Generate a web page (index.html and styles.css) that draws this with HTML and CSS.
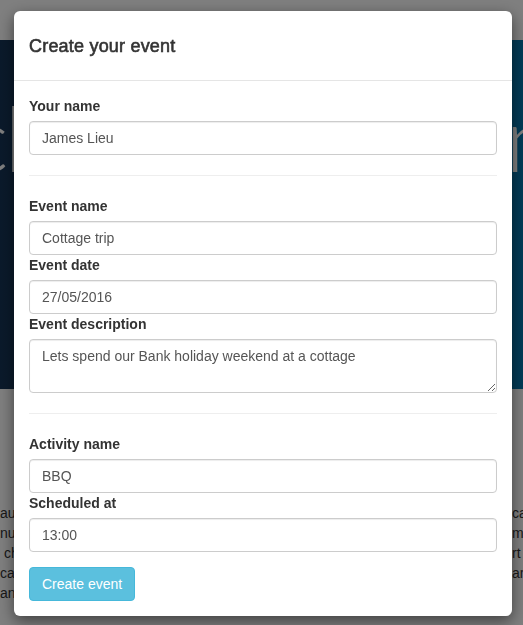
FILE: index.html
```html
<!DOCTYPE html>
<html lang="en">
<head>
<meta charset="utf-8">
<title>Create your event</title>
<link rel="stylesheet" href="styles.css">
</head>
<body>
  <div class="page">
    <nav class="navbar"></nav>
    <header class="hero">
      <h1 class="hero-title"><span class="hero-left">cl</span><span>n</span></h1>
    </header>
    <section class="content">
      <p class="col col-left">aut odit aut fugit<br>nulla pariatur<br>&nbsp;choose a date<br>cabin weekend<br>and friends</p>
      <p class="col col-right">camping trip<br>minutes<br>rt of the day<br>ar the lake</p>
    </section>
  </div>

  <div class="backdrop"></div>

  <div class="modal">
    <div class="modal-header">
      <h4 class="modal-title">Create your event</h4>
    </div>
    <form class="modal-body">
      <label class="label">Your name</label>
      <input class="input" type="text" value="James Lieu">
      <hr class="divider">
      <label class="label">Event name</label>
      <input class="input" type="text" value="Cottage trip">
      <label class="label">Event date</label>
      <input class="input" type="text" value="27/05/2016">
      <label class="label">Event description</label>
      <textarea class="input textarea">Lets spend our Bank holiday weekend at a cottage</textarea>
      <hr class="divider">
      <label class="label">Activity name</label>
      <input class="input" type="text" value="BBQ">
      <label class="label">Scheduled at</label>
      <input class="input" type="text" value="13:00">
      <button class="btn" type="button">Create event</button>
    </form>
  </div>
</body>
</html>
```
FILE: styles.css
```css
* { box-sizing: border-box; }

html, body {
  margin: 0;
  height: 100%;
  overflow: hidden;
}

body {
  font-family: "Liberation Sans", Arial, sans-serif;
  font-size: 14px;
  line-height: 20px;
  color: #333;
  background: #fff;
}

.navbar {
  height: 40px;
  background: #fff;
}

.hero {
  height: 349px;
  background: linear-gradient(to right, #163456, #0476ae);
  overflow: hidden;
  padding-top: 52px;
}

.hero-title {
  display: flex;
  justify-content: space-between;
  margin: 0 -32px 0 -34px;
  font-family: Lato, "Open Sans", sans-serif;
  font-weight: 300;
  font-size: 90px;
  line-height: 90px;
  color: #fff;
}

.hero-left {
  letter-spacing: -4px;
}

.content {
  display: flex;
  justify-content: space-between;
  padding-top: 114px;
  white-space: nowrap;
}

.col {
  margin: 0;
  color: #333;
}

.col-right {
  width: 11px;
}

.backdrop {
  position: fixed;
  inset: 0;
  background: #000;
  opacity: 0.5;
}

.modal {
  position: fixed;
  top: 11px;
  left: 14px;
  width: 498px;
  background: #fff;
  border-radius: 6px;
  box-shadow: 0 5px 15px rgba(0, 0, 0, 0.5);
}

.modal-header {
  padding: 22px 15px 21px;
  border-bottom: 1px solid #e5e5e5;
}

.modal-title {
  margin: 0;
  font-size: 18px;
  line-height: 26px;
  font-weight: normal;
  letter-spacing: 0.2px;
  color: #333;
  -webkit-text-stroke: 0.6px #333;
}

.modal-body {
  display: flex;
  flex-direction: column;
  align-items: flex-start;
  padding: 15px;
}

.label {
  display: block;
  font-weight: bold;
  margin-bottom: 5px;
}

.input {
  display: block;
  width: 100%;
  height: 34px;
  padding: 6px 12px;
  font-family: inherit;
  font-size: 14px;
  line-height: 20px;
  color: #555;
  background: #fff;
  border: 1px solid #ccc;
  border-radius: 4px;
  box-shadow: inset 0 1px 1px rgba(0, 0, 0, 0.075);
  margin: 0;
}

.textarea {
  height: 54px;
  resize: vertical;
}

.divider {
  align-self: stretch;
  margin: 20px 0;
  border: 0;
  border-top: 1px solid #eee;
  height: 0;
}

.btn {
  margin-top: 15px;
  height: 34px;
  padding: 6px 12px;
  font-family: inherit;
  font-size: 14px;
  line-height: 20px;
  color: #fff;
  background: #5bc0de;
  border: 1px solid #46b8da;
  border-radius: 4px;
}
```
